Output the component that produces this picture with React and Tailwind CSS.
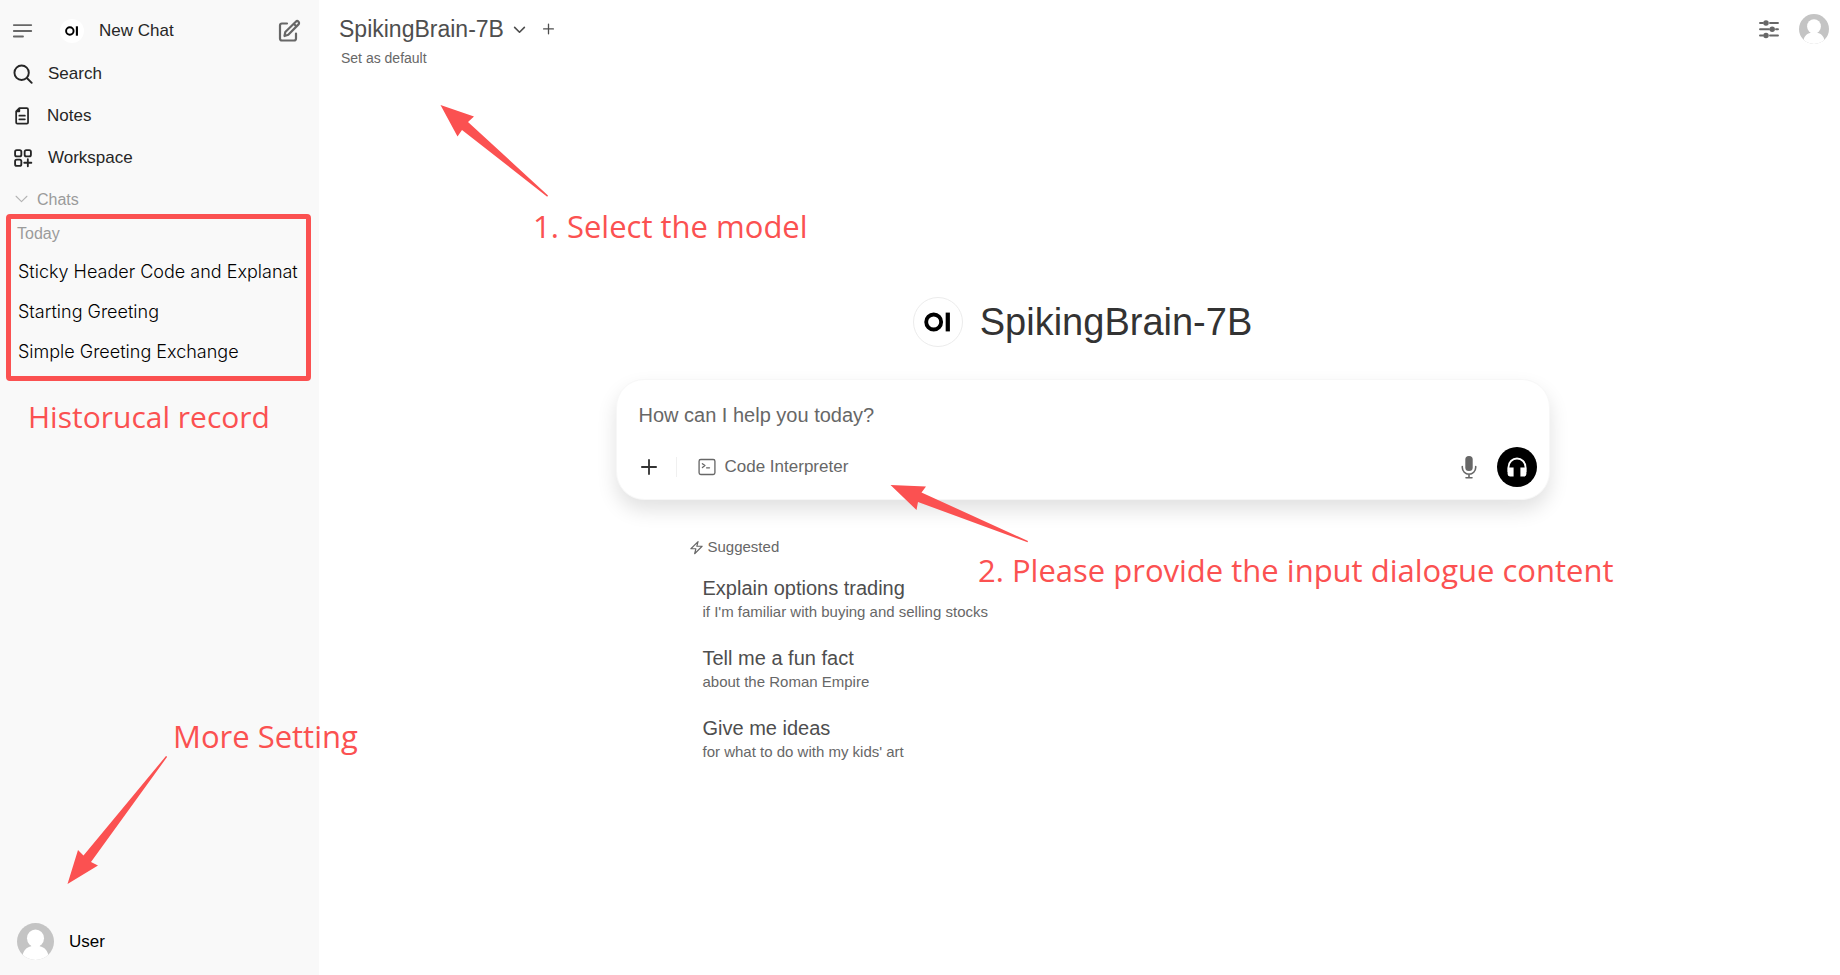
const archivo = "font-['Liberation_Sans',Arial,sans-serif]";
const marker = "font-['Open_Sans','Noto_Sans',sans-serif] text-[#fb5151] whitespace-nowrap";

const chats = [
  'Sticky Header Code and Explanat',
  'Starting Greeting',
  'Simple Greeting Exchange'
];

const suggestions = [
  { title: 'Explain options trading', text: "if I'm familiar with buying and selling stocks" },
  { title: 'Tell me a fun fact', text: 'about the Roman Empire' },
  { title: 'Give me ideas', text: "for what to do with my kids' art" }
];

function Icon({ className, strokeWidth = 2, children }) {
  return (
    <svg
      className={className}
      viewBox="0 0 24 24"
      fill="none"
      stroke="currentColor"
      strokeWidth={strokeWidth}
      strokeLinecap="round"
      strokeLinejoin="round"
      aria-hidden="true"
    >
      {children}
    </svg>
  );
}

function Logo({ className }) {
  return (
    <svg className={className} viewBox="0 0 50 50" aria-hidden="true">
      <circle cx="20.5" cy="25" r="7.8" fill="none" stroke="#000" strokeWidth="4" />
      <rect x="33" y="15.2" width="4.4" height="19.6" fill="#000" />
    </svg>
  );
}

function Avatar({ className }) {
  return (
    <svg className={className} viewBox="0 0 40 40" aria-hidden="true">
      <defs>
        <clipPath id="avatar-clip">
          <circle cx="20" cy="20" r="20" />
        </clipPath>
      </defs>
      <g clipPath="url(#avatar-clip)">
        <rect width="40" height="40" fill="#c4c4c4" />
        <ellipse cx="20" cy="16.5" rx="9.2" ry="9.5" fill="#fff" />
        <path d="M15.500 22v3C10 26 7 30 6 35v5h28v-5c-1-5-4-9-9.500-10v-3z" fill="#fff" />
      </g>
    </svg>
  );
}

function Sidebar() {
  return (
    <aside className="relative flex w-[319px] shrink-0 flex-col bg-[#f9f9f9] text-[17px] leading-6 text-[#262626]">
      <div className="flex h-[53px] items-center pt-2 pl-3 pr-[18px]">
        <button aria-label="Toggle sidebar" className="text-[#676767]">
          <Icon className="size-[22px]" strokeWidth={2}>
            <path d="M2 5.500h19M2 12h19M2 18h10" />
          </Icon>
        </button>
        <button className="ml-[26px] flex flex-1 items-center gap-[15px]">
          <span className="size-6 rounded-full bg-white">
            <Logo className="size-6" />
          </span>
          New Chat
        </button>
        <button aria-label="New chat" className="text-[#676767]">
          <Icon className="size-6" strokeWidth={2.2}>
            <path d="M10 4.500H5a2 2 0 0 0-2 2v13a2 2 0 0 0 2 2h12a2 2 0 0 0 2-2v-5" />
            <path d="M7.500 17l.8-4L18.800 2.700a1.900 1.900 0 0 1 2.700 2.700L11.300 15.800zM16.800 4.800l2.700 2.700" />
          </Icon>
        </button>
      </div>

      <nav className="flex flex-col">
        <a href="#search" className="flex h-[42px] items-center gap-[15px] pl-3">
          <Icon className="size-[21px]" strokeWidth={2.2}>
            <circle cx="11" cy="10" r="8.200" />
            <path d="M17 16l5.500 5.500" />
          </Icon>
          Search
        </a>
        <a href="#notes" className="flex h-[42px] items-center gap-[15px] pl-[13px]">
          <Icon className="size-[19px]" strokeWidth={2.2}>
            <path d="M8 1.500h9.500A1.500 1.500 0 0 1 19 3v16.500a1.500 1.500 0 0 1-1.500 1.500h-12A1.500 1.500 0 0 1 4 19.500v-14zM8 1.500v4H4M8 11h7M8 15.500h7" />
          </Icon>
          Notes
        </a>
        <a href="#workspace" className="flex h-[42px] items-center gap-[15px] pl-[13px]">
          <Icon className="size-5" strokeWidth={2.2}>
            <rect x="2.500" y="2.500" width="7.500" height="7.500" rx="2" />
            <rect x="14" y="2.500" width="7.500" height="7.500" rx="2" />
            <rect x="2.500" y="14" width="7.500" height="7.500" rx="2" />
            <path d="M17.800 13.500V22M13.500 17.700H22" />
          </Icon>
          Workspace
        </a>
      </nav>

      <button className="flex h-[35px] items-center gap-[9px] pt-[6px] pl-[15px] text-[16px] leading-5 text-[#9b9b9b]">
        <Icon className="size-[13px] text-[#b4b4b4]">
          <path d="M2 6l10 10L22 6" />
        </Icon>
        Chats
      </button>

      <section className="ml-[6px] mr-2 rounded-sm border-[5px] border-[#fb5151] pt-[5px] pb-1">
        <h2 className="pl-[6px] text-[16px] leading-5 text-[#9b9b9b]">Today</h2>
        <ul className="mt-2 font-['Inter',sans-serif] text-[18px] font-light text-black">
          {chats.map(chat => (
            <li key={chat}>
              <a href="#chat" className="flex h-10 items-center pl-[7px] whitespace-nowrap">{chat}</a>
            </li>
          ))}
        </ul>
      </section>
      <p className={`${marker} mt-[15px] pl-7 text-[30px] leading-[42px]`}>Historucal record</p>

      <button className="mt-auto flex items-center gap-[15px] pb-[15px] pl-[17px] text-black">
        <Avatar className="size-[37px]" />
        User
      </button>

      <p className={`${marker} absolute bottom-[218px] left-[173px] z-10 text-[31px] leading-[42px]`}>More Setting</p>
      <svg className="absolute bottom-[90px] left-[67px] h-[130px] w-[101px]" viewBox="67 755 101 130" fill="#fb5151" aria-hidden="true">
        <path d="M67.500 884L78 850l5.500 5.500L166 756l1.200.8L91 862l7 3.500z" />
      </svg>
    </aside>
  );
}

function Header() {
  return (
    <header className="flex h-[78px] items-start justify-between pt-[13px] pr-[11px] pl-5">
      <div>
        <div className="flex items-center text-[#4e4e4e]">
          <button className="flex items-center gap-[9px] text-[23px] leading-8">
            SpikingBrain-7B
            <Icon className="size-[13px]" strokeWidth={3}>
              <path d="M3 8l9 9 9-9" />
            </Icon>
          </button>
          <button aria-label="Add model" className="ml-4">
            <Icon className="size-[13px]" strokeWidth={2.4}>
              <path d="M12 2v18M3 11h18" />
            </Icon>
          </button>
        </div>
        <button className="mt-px ml-[2px] flex text-[14px] leading-6 text-[#676767]">Set as default</button>
      </div>
      <div className="flex items-center gap-5 pt-px">
        <button aria-label="Controls" className="text-[#676767]">
          <svg className="size-5" viewBox="0 0 20 20" stroke="currentColor" strokeWidth="1.900" strokeLinecap="round" fill="currentColor" aria-hidden="true">
            <path d="M1 4h3M11 4h8M1 10.300h9M17 10.300h2M1 16.500h3M11 16.500h8" />
            <circle cx="7" cy="4" r="1.800" />
            <circle cx="13.200" cy="10.300" r="1.800" />
            <circle cx="7" cy="16.500" r="1.800" />
          </svg>
        </button>
        <button aria-label="Account">
          <Avatar className="size-[30px]" />
        </button>
      </div>
    </header>
  );
}

function Composer() {
  return (
    <form className="flex h-[121px] flex-col justify-between rounded-[28px] border border-[#f7f7f7] bg-white pt-[11px] pr-3 pb-3 pl-[11px] shadow-[0_10px_20px_rgba(0,0,0,0.12)]">
      <input
        type="text"
        aria-label="Message"
        placeholder="How can I help you today?"
        className="mt-2 ml-[11px] h-8 text-[20px] outline-none placeholder:text-[#676767]"
      />
      <div className="flex h-10 items-center">
        <button type="button" aria-label="More" className="ml-[11px] text-[#333333]">
          <Icon className="size-5" strokeWidth={2.2}>
            <path d="M12 3.500v17M3.500 12h17" />
          </Icon>
        </button>
        <span className="ml-[17px] h-5 w-px bg-[#f0f0f0]" />
        <button type="button" className="ml-5 flex items-center gap-2 text-[17px] leading-6 text-[#676767]">
          <Icon className="size-5" strokeWidth={1.6}>
            <rect x="2.500" y="3" width="19" height="18" rx="2" />
            <path d="M6.500 8l3 2.300-3 2.300M11.500 13h3.500" />
          </Icon>
          Code Interpreter
        </button>
        <button type="button" aria-label="Dictate" className="ml-auto text-[#676767]">
          <svg className="size-6" viewBox="0 0 24 24" fill="none" stroke="currentColor" strokeWidth="1.600" strokeLinecap="round" aria-hidden="true">
            <rect x="8.300" y="1" width="7.400" height="15" rx="3.500" fill="currentColor" stroke="none" />
            <path d="M5.300 11.500v1a6.700 6.700 0 0 0 13.400 0v-1M12 19v3.500M9 22.700h6" />
          </svg>
        </button>
        <button type="button" aria-label="Voice call" className="ml-4 flex size-10 items-center justify-center rounded-full bg-black text-white">
          <svg className="size-6" viewBox="0 0 24 24" fill="none" stroke="currentColor" aria-hidden="true">
            <path d="M3.500 17v-5a8.500 8.500 0 0 1 17 0v5" strokeWidth="1.800" />
            <path d="M2.600 12.500h6v9H5a2.400 2.400 0 0 1-2.400-2.400zM21.400 12.500h-6v9H19a2.400 2.400 0 0 0 2.400-2.400z" fill="currentColor" stroke="none" />
          </svg>
        </button>
      </div>
    </form>
  );
}

export default function App() {
  return (
    <div className={`${archivo} flex min-h-screen bg-white`}>
      <Sidebar />
      <main className="relative min-w-0 flex-1">
        <Header />
        <div className="mx-auto w-full max-w-[940px] pt-[219px] pl-[6px]">
          <div className="flex items-center justify-center gap-[17px]">
            <span className="size-[50px] rounded-full border border-[#ececec]">
              <Logo className="size-12" />
            </span>
            <h1 className="text-[38px] leading-[50px] text-[#333333]">SpikingBrain-7B</h1>
          </div>
          <div className="mt-8">
            <Composer />
          </div>
          <div className="mt-[35px] pl-[73px]">
            <h2 className="flex items-center gap-1 text-[15px] leading-6 text-[#676767]">
              <Icon className="size-[15px]" strokeWidth={1.8}>
                <path d="M14.500 2.500L3 14h8l-2 8L21 10h-8.500z" />
              </Icon>
              Suggested
            </h2>
            <ul className="mt-[15px] flex flex-col gap-[22px] pl-[14px]">
              {suggestions.map(({ title, text }) => (
                <li key={title}>
                  <button className="flex flex-col text-left">
                    <span className="text-[20px] leading-7 text-[#4e4e4e]">{title}</span>
                    <span className="text-[15px] leading-5 text-[#676767]">{text}</span>
                  </button>
                </li>
              ))}
            </ul>
          </div>
        </div>

        {/* walkthrough notes */}
        <svg className="absolute top-[104px] left-[121px] h-[94px] w-[109px]" viewBox="440 104 109 94" fill="#fb5151" aria-hidden="true">
          <path d="M440.500 105L474 116.500l-6 5.500 80 73.500-.8 1.200L462 130l-4.500 6.500z" />
        </svg>
        <p className={`${marker} absolute top-[205px] left-[214px] text-[31px] leading-[42px]`}>1. Select the model</p>
        <svg className="absolute top-[484px] left-[571px] h-[59px] w-[139px]" viewBox="890 484 139 59" fill="#fb5151" aria-hidden="true">
          <path d="M890.500 485l35.500 1.500-4.500 6L1028 541l-.5 1.200L918 502l-1.500 8z" />
        </svg>
        <p className={`${marker} absolute top-[549px] left-[659px] text-[31px] leading-[42px]`}>
          2. Please provide the input dialogue content
        </p>
      </main>
    </div>
  );
}
